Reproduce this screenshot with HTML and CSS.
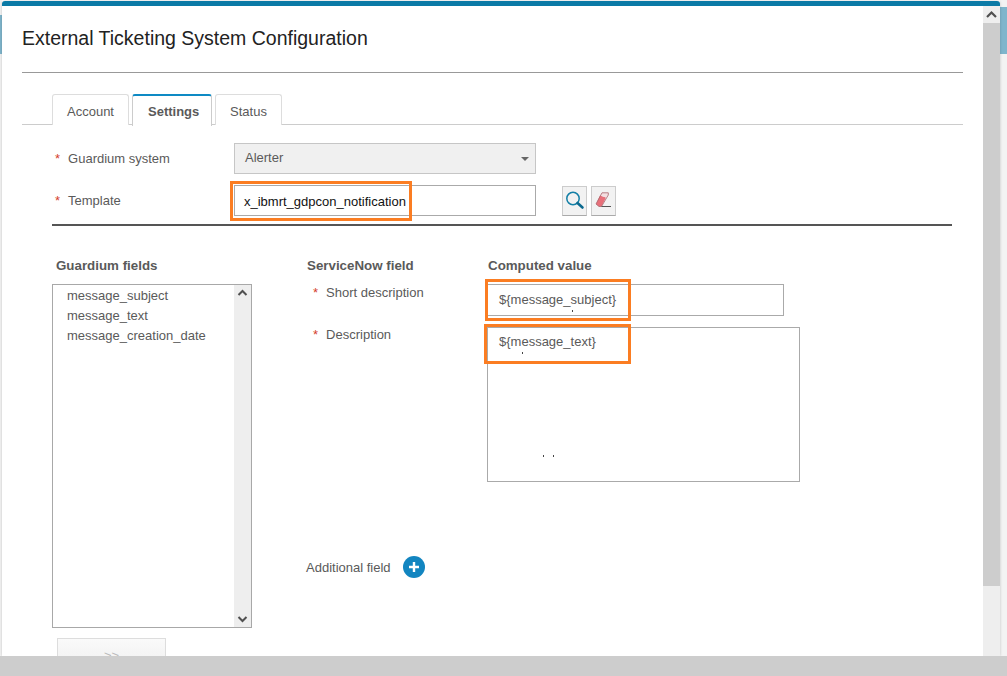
FILE: index.html
```html
<!DOCTYPE html>
<html>
<head>
    <title>External Ticketing System Configuration</title>
    <link rel="stylesheet" href="styles.css">
</head>
<body>
    <div class="page">
        <div class="dialog">
            <div class="dialog-top"></div>
            <div class="dialog-main">
                <div class="content">
                    <h1>External Ticketing System Configuration</h1>
                    <div class="tabs">
                        <div class="tab">Account</div>
                        <div class="tab active">Settings</div>
                        <div class="tab">Status</div>
                    </div>

                    <div class="form-row row-system">
                        <label class="row-label"><span class="req">*</span>Guardium system</label>
                        <div class="select">Alerter<span class="caret"></span></div>
                    </div>
                    <div class="form-row row-template">
                        <label class="row-label"><span class="req">*</span>Template</label>
                        <div class="input template-input">x_ibmrt_gdpcon_notification
                            <span class="mark mark-template"></span>
                        </div>
                        <button class="icon-btn first">
                            <svg width="21" height="21" viewBox="0 0 21 21">
                                <circle cx="8" cy="8.5" r="6.2" fill="none" stroke="#137fa6" stroke-width="1.5"/>
                                <path d="M12.5 13L17.5 17.5" stroke="#0c6a8f" stroke-width="2.6" stroke-linecap="round"/>
                            </svg>
                        </button>
                        <button class="icon-btn">
                            <svg width="21" height="21" viewBox="0 0 21 21">
                                <path d="M2 14L6 5.5L12 7.5L7.5 16.5H5Z" fill="#e8707a"/>
                                <path d="M6 5.5L8 2.8H14.3V5L12 7.5Z" fill="#f3dfe1"/>
                                <path d="M2 14L8 2.8H14.3V5L7.5 16.5H5Z" fill="none" stroke="#a8656c" stroke-width="0.8"/>
                                <path d="M7.5 16.5H17" stroke="#555" stroke-width="1"/>
                            </svg>
                        </button>
                    </div>
                    <div class="form-rule"></div>

                    <div class="mapping">
                        <div class="col-fields">
                            <div class="col-head head-fields">Guardium fields</div>
                            <div class="listbox">
                                <div class="list-items">
                                    <div>message_subject</div>
                                    <div>message_text</div>
                                    <div>message_creation_date</div>
                                </div>
                                <div class="list-scroll">
                                    <svg width="17" height="17" viewBox="0 0 17 17"><path d="M4.5 10L8.5 6L12.5 10" fill="none" stroke="#505050" stroke-width="2"/></svg>
                                    <svg width="17" height="17" viewBox="0 0 17 17"><path d="M4.5 7L8.5 11L12.5 7" fill="none" stroke="#505050" stroke-width="2"/></svg>
                                </div>
                            </div>
                            <button class="move-btn">&gt;&gt;</button>
                        </div>

                        <div class="col-map">
                            <div class="col-heads">
                                <div class="col-head head-snow">ServiceNow field</div>
                                <div class="col-head">Computed value</div>
                            </div>
                            <div class="map-row row-short">
                                <label class="map-label"><span class="req">*</span>Short description</label>
                                <div class="input short-input">${message_subject}
                                    <span class="mark mark-short"></span>
                                    <span class="speck speck-a"></span>
                                </div>
                            </div>
                            <div class="map-row row-desc">
                                <label class="map-label"><span class="req">*</span>Description</label>
                                <div class="input desc-input">${message_text}
                                    <span class="mark mark-desc"></span>
                                    <span class="speck speck-b"></span>
                                    <span class="speck speck-c"></span>
                                    <span class="speck speck-d"></span>
                                </div>
                            </div>
                            <div class="additional">
                                <span>Additional field</span>
                                <svg class="add-icon" width="22" height="22" viewBox="0 0 22 22">
                                    <circle cx="11" cy="11" r="11" fill="#1285c0"/>
                                    <path d="M11 6V16M6 11H16" stroke="#fff" stroke-width="2.4"/>
                                </svg>
                            </div>
                        </div>
                    </div>
                </div>
                <div class="dialog-scroll">
                    <div class="scroll-up">
                        <svg width="17" height="17" viewBox="0 0 17 17"><path d="M4 11L8.5 6.5L13 11" fill="none" stroke="#505050" stroke-width="2.2"/></svg>
                    </div>
                    <div class="scroll-thumb"></div>
                </div>
            </div>
        </div>
    </div>
    <div class="bottom-bar"></div>
</body>
</html>
```

FILE: styles.css
```css
* {
    box-sizing: border-box;
}

html, body {
    margin: 0;
    height: 100%;
    overflow: hidden;
}

body {
    font-family: 'Liberation Sans', Arial, sans-serif;
    font-size: 13px;
    color: #5a5a5a;
    display: flex;
    flex-direction: column;
}

.page {
    height: 656px;
    padding: 1px 7px 0 2px;
    background:
        linear-gradient(to bottom, #f3f3f3 15px, #7fb5cc 15px, #7fb5cc 54px, #f3f3f3 54px) left / 2px 100% no-repeat,
        linear-gradient(to bottom, #f3f3f3 7px, #7fb5cc 7px, #7fb5cc 54px, #f3f3f3 54px) right / 7px 100% no-repeat;
}

.bottom-bar {
    flex: 1;
    background-color: #cdcdcd;
}

.dialog {
    height: 100%;
    background: white;
    display: flex;
    flex-direction: column;
    overflow: hidden;
    border-radius: 3px 3px 0 0;
    box-shadow: 0 0 3px rgba(0,0,0,0.2);
}

.dialog-top {
    height: 5px;
    background-color: #0b7aa6;
    flex: none;
}

.dialog-main {
    flex: 1;
    display: flex;
    min-height: 0;
}

.content {
    flex: 1;
    padding: 0 20px;
    overflow: hidden;
}

.dialog-scroll {
    width: 17px;
    background-color: #eeeeee;
    flex: none;
}

.scroll-up {
    height: 17px;
}

.scroll-up svg, .list-scroll svg {
    display: block;
}

.scroll-thumb {
    height: 563px;
    background-color: #cdcdcd;
}

h1 {
    margin: 0;
    height: 67px;
    padding-top: 20px;
    font-size: 19.5px;
    line-height: 24px;
    font-weight: normal;
    color: #222;
    border-bottom: 1px solid #999;
}

.tabs {
    display: flex;
    gap: 3px;
    margin-top: 21px;
    padding-left: 30px;
    height: 31px;
    border-bottom: 1px solid #ccc;
}

.tab {
    height: 31px;
    padding: 9px 14px 0;
    font-size: 13px;
    line-height: 15px;
    border: 1px solid #ddd;
    border-bottom: none;
    border-radius: 3px 3px 0 0;
    background: white;
    min-width: 67px;
    text-align: center;
}

.tab:first-child {
    width: 77px;
}

.tab.active {
    width: 80px;
    min-width: 0;
    padding: 8px 13px 0 15px;
    font-weight: bold;
    border-color: #ccc;
    border-top: 2px solid #0e8ac4;
    position: relative;
    z-index: 1;
    height: 32px;
}

.form-row {
    display: flex;
    align-items: center;
    position: relative;
}

.row-system {
    margin-top: 18px;
    height: 31px;
}

.row-template {
    margin-top: 11px;
    height: 31px;
}

.row-label {
    width: 212px;
    padding-left: 33px;
    font-size: 13px;
}

.req {
    color: #d4402b;
    margin-right: 8px;
    font-size: 13px;
}

.select {
    width: 302px;
    height: 31px;
    padding: 6px 10px;
    font-size: 13px;
    line-height: 16px;
    background-color: #f0f0f0;
    border: 1px solid #c6c6c6;
    position: relative;
}

.caret {
    position: absolute;
    right: 6px;
    top: 13px;
    border-left: 4px solid transparent;
    border-right: 4px solid transparent;
    border-top: 4px solid #666;
}

.input {
    border: 1px solid #aaa;
    background: white;
    font-size: 13px;
    position: relative;
    white-space: nowrap;
}

.template-input {
    width: 302px;
    height: 31px;
    padding: 8px 9px;
    line-height: 15px;
    color: #111;
}

.icon-btn {
    width: 25px;
    height: 30px;
    padding: 0 0 0 2px;
    border: 1px solid #ccc;
    border-bottom-color: #aaa;
    background: #f2f2f2;
    margin-left: 4px;
    display: flex;
    align-items: center;
}

.icon-btn.first {
    margin-left: 26px;
}

.form-rule {
    margin-top: 8px;
    margin-left: 30px;
    width: 900px;
    height: 2px;
    background-color: #555;
}

.mapping {
    display: flex;
    padding-left: 30px;
}

.col-fields {
    width: 254px;
    flex: none;
}

.col-head {
    font-size: 13.33px;
    font-weight: bold;
    line-height: 15px;
    padding-top: 32px;
}

.head-fields {
    padding-left: 4px;
}

.listbox {
    margin-top: 11px;
    width: 200px;
    height: 344px;
    border: 1px solid #a8a8a8;
    display: flex;
}

.list-items {
    flex: 1;
    padding: 1px 0 0 14px;
    font-size: 13px;
    line-height: 20px;
}

.list-scroll {
    width: 17px;
    background-color: #eeeeee;
    display: flex;
    flex-direction: column;
    justify-content: space-between;
}

.move-btn {
    display: block;
    margin: 10px 0 0 5px;
    width: 109px;
    height: 34px;
    border: 1px solid #ddd;
    background: linear-gradient(#fafafa, #eeeeee);
    color: #bbb;
    font-size: 13px;
    font-family: 'Liberation Sans', Arial, sans-serif;
    padding: 0;
}

.col-map {
    flex: 1;
}

.col-heads {
    display: flex;
}

.head-snow {
    width: 182px;
    padding-left: 1px;
}

.map-row {
    display: flex;
    position: relative;
}

.row-short {
    margin-top: 11px;
}

.row-desc {
    margin-top: 11px;
}

.map-label {
    width: 181px;
    padding: 1px 0 0 7px;
    font-size: 13px;
    line-height: 15px;
}

.row-desc .map-label {
    padding-top: 0;
}

.short-input {
    width: 297px;
    height: 32px;
    padding: 6px 11px;
    line-height: 17px;
}

.desc-input {
    width: 313px;
    height: 155px;
    padding: 5px 11px;
    line-height: 17px;
}

/* orange annotation boxes from the screenshot */
.mark {
    position: absolute;
    border: 3px solid #fb7d22;
    pointer-events: none;
}

.mark-template {
    left: -5px;
    top: -5px;
    width: 182px;
    height: 40px;
}

.mark-short {
    left: -3px;
    top: -6px;
    width: 146px;
    height: 42px;
}

.mark-desc {
    left: -4px;
    top: -4px;
    width: 147px;
    height: 40px;
}

.speck {
    position: absolute;
    width: 1px;
    height: 2px;
    background-color: #444;
}

.speck-a {
    left: 84px;
    top: 25px;
}

.speck-b {
    left: 34px;
    top: 24px;
}

.speck-c {
    left: 55px;
    top: 127px;
}

.speck-d {
    left: 65px;
    top: 127px;
}

.additional {
    display: flex;
    align-items: center;
    margin-top: 74px;
    font-size: 13px;
}

.add-icon {
    margin-left: 12px;
}
```
